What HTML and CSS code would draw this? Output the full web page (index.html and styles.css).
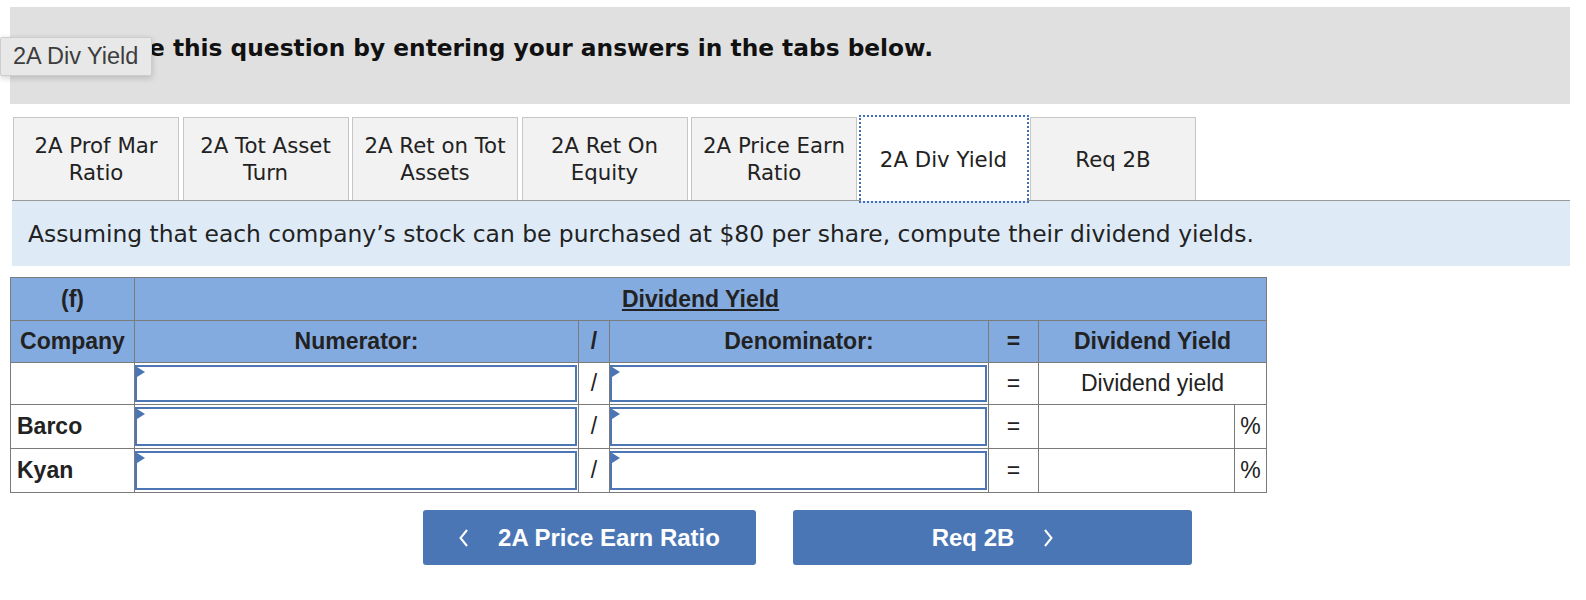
FILE: index.html
```html
<!DOCTYPE html>
<html lang="en">
<head>
    <meta charset="UTF-8">
    <title>2A Div Yield</title>
    <link rel="stylesheet" href="styles.css">
</head>
<body>
    <div class="tooltip">2A Div Yield</div>

    <div class="page">
        <div class="intro">
            <p>Complete this question by entering your answers in the tabs below.</p>
        </div>

        <div class="tabs">
            <div class="tab">2A Prof Mar<br>Ratio</div>
            <div class="tab">2A Tot Asset<br>Turn</div>
            <div class="tab">2A Ret on Tot<br>Assets</div>
            <div class="tab">2A Ret On<br>Equity</div>
            <div class="tab">2A Price Earn<br>Ratio</div>
            <div class="tab active">2A Div Yield</div>
            <div class="tab">Req 2B</div>
        </div>

        <div class="prompt">Assuming that each company’s stock can be purchased at $80 per share, compute their dividend yields.</div>

        <table class="grid">
            <colgroup>
                <col class="c-company">
                <col class="c-num">
                <col class="c-op">
                <col class="c-den">
                <col class="c-eq">
                <col class="c-result">
                <col class="c-pct">
            </colgroup>
            <tr class="head head-top">
                <th>(f)</th>
                <th colspan="6"><u>Dividend Yield</u></th>
            </tr>
            <tr class="head">
                <th>Company</th>
                <th>Numerator:</th>
                <th>/</th>
                <th>Denominator:</th>
                <th>=</th>
                <th colspan="2">Dividend Yield</th>
            </tr>
            <tr class="row-a">
                <td></td>
                <td class="entry"><span class="field"></span></td>
                <td class="op">/</td>
                <td class="entry"><span class="field"></span></td>
                <td class="op">=</td>
                <td class="op" colspan="2">Dividend yield</td>
            </tr>
            <tr class="row-b">
                <td class="company">Barco</td>
                <td class="entry"><span class="field"></span></td>
                <td class="op">/</td>
                <td class="entry"><span class="field"></span></td>
                <td class="op">=</td>
                <td></td>
                <td class="op">%</td>
            </tr>
            <tr class="row-b">
                <td class="company">Kyan</td>
                <td class="entry"><span class="field"></span></td>
                <td class="op">/</td>
                <td class="entry"><span class="field"></span></td>
                <td class="op">=</td>
                <td></td>
                <td class="op">%</td>
            </tr>
        </table>

        <div class="nav">
            <button class="nav-btn prev">
                <svg width="9" height="18" viewBox="0 0 9 18"><polyline points="8,1 1.5,9 8,17" fill="none" stroke="#fff" stroke-width="2"/></svg>
                2A Price Earn Ratio
            </button>
            <button class="nav-btn next">
                Req 2B
                <svg width="9" height="18" viewBox="0 0 9 18"><polyline points="1,1 7.5,9 1,17" fill="none" stroke="#fff" stroke-width="2"/></svg>
            </button>
        </div>
    </div>
</body>
</html>
```

FILE: styles.css
```css
/* Global */
body {
    margin: 0;
    background-color: #fff;
    color: #222;
    font-family: "DejaVu Sans", Verdana, sans-serif;
}

.page {
    width: 1560px;
    padding: 7px 0 0 10px;
}

/* Hover tooltip over the title */
.tooltip {
    position: absolute;
    top: 37px;
    left: 0;
    z-index: 5;
    width: 152px;
    height: 39px;
    box-sizing: border-box;
    padding-left: 12px;
    background-color: #e8e8e8;
    border: 1px solid #cdcdcd;
    border-radius: 2px;
    box-shadow: 0 2px 6px rgba(0, 0, 0, 0.18);
    font-family: "Liberation Sans", Arial, sans-serif;
    font-size: 23.5px;
    line-height: 37px;
    color: #3d3d3d;
}

/* Title bar */
.intro {
    height: 97px;
    background-color: #e0e0e0;
}

.intro p {
    margin: 0;
    padding: 27px 0 0 30px;
    font-size: 23.3px;
    font-weight: bold;
    line-height: 28px;
    color: #111;
}

/* Tabs */
.tabs {
    display: flex;
    gap: 3.5px;
    margin: 13px 0 0 2px;
    padding-left: 1px;
    border-bottom: 1px solid #9a9a9a;
}

.tab {
    display: flex;
    align-items: center;
    justify-content: center;
    width: 166px;
    height: 83px;
    box-sizing: border-box;
    background-color: #f2f2f2;
    border: 1px solid #c6c6c6;
    border-bottom: none;
    text-align: center;
    font-size: 21.3px;
    line-height: 27px;
    color: #222;
}

.tab.active {
    position: relative;
    height: 84px;
    margin-bottom: -1px;
    background-color: #fff;
    border-color: transparent;
    outline: 2px dotted #3d6fbe;
}

/* Prompt band */
.prompt {
    height: 65px;
    margin-left: 2px;
    padding-left: 16px;
    display: flex;
    align-items: center;
    background-color: #deebf7;
    font-size: 23.4px;
    color: #222;
}

/* Answer grid */
.grid {
    margin-top: 11px;
    width: 1256px;
    table-layout: fixed;
    border-collapse: collapse;
    font-family: "Liberation Sans", Arial, sans-serif;
    font-size: 23px;
    color: #222;
}

.c-company { width: 124px; }
.c-num { width: 444px; }
.c-op { width: 31px; }
.c-den { width: 379px; }
.c-eq { width: 50px; }
.c-result { width: 196px; }
.c-pct { width: 32px; }

.grid th,
.grid td {
    border: 1px solid #7b7b7b;
    padding: 0;
    text-align: center;
}

.head th {
    height: 41px;
    background-color: #84abe0;
    font-weight: bold;
    color: #222;
}

.head-top th {
    height: 42px;
}

.row-a td {
    height: 39px;
}

.row-b td {
    height: 41px;
}

.grid td.company {
    text-align: left;
    padding-left: 6px;
    font-weight: bold;
}

.grid td.entry {
    padding: 1px 1px 1px 0;
}

/* Input boxes with the corner marker */
.field {
    position: relative;
    display: block;
    height: 39px;
    box-sizing: border-box;
    background-color: #fff;
    border: 2px solid #4d76b4;
}

.row-a .field {
    height: 37px;
}

.field::before {
    content: "";
    position: absolute;
    top: 0;
    left: 0;
    border-left: 8px solid #4a74b3;
    border-top: 5px solid transparent;
    border-bottom: 5px solid transparent;
}

/* Navigation buttons */
.nav {
    display: flex;
    gap: 37px;
    margin-top: 17px;
    padding-left: 413px;
}

.nav-btn {
    display: flex;
    align-items: center;
    justify-content: center;
    gap: 30px;
    height: 55px;
    padding: 0;
    background-color: #4a76b5;
    border: none;
    border-radius: 3px;
    color: #fff;
    font-family: "Liberation Sans", Arial, sans-serif;
    font-size: 24px;
    font-weight: bold;
}

.nav-btn.prev { width: 333px; }
.nav-btn.next { width: 399px; }
```
